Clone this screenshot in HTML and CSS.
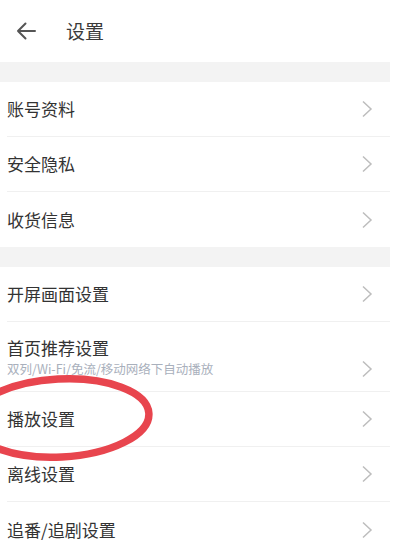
FILE: index.html
```html
<!DOCTYPE html>
<html lang="zh">
<head>
<meta charset="utf-8">
<title>设置</title>
<link rel="stylesheet" href="styles.css">
</head>
<body>
<div class="page">
  <header class="topbar">
    <svg class="back" width="22" height="20" viewBox="0 0 22 20"><path d="M20 10H3M10.5 2.5L3 10l7.5 7.5" fill="none" stroke="#555" stroke-width="2" stroke-linecap="round" stroke-linejoin="round"/></svg>
    <h1 class="title">设置</h1>
  </header>
  <div class="band"></div>
  <section class="group">
    <div class="row"><span class="label">账号资料</span><svg class="chev" width="12" height="18" viewBox="0 0 12 18"><path d="M2 1.5l8 7.5-8 7.5" fill="none" stroke="#bdbdbd" stroke-width="1.5"/></svg></div>
    <div class="row"><span class="label">安全隐私</span><svg class="chev" width="12" height="18" viewBox="0 0 12 18"><path d="M2 1.5l8 7.5-8 7.5" fill="none" stroke="#bdbdbd" stroke-width="1.5"/></svg></div>
    <div class="row last"><span class="label">收货信息</span><svg class="chev" width="12" height="18" viewBox="0 0 12 18"><path d="M2 1.5l8 7.5-8 7.5" fill="none" stroke="#bdbdbd" stroke-width="1.5"/></svg></div>
  </section>
  <div class="band"></div>
  <section class="group">
    <div class="row"><span class="label">开屏画面设置</span><svg class="chev" width="12" height="18" viewBox="0 0 12 18"><path d="M2 1.5l8 7.5-8 7.5" fill="none" stroke="#bdbdbd" stroke-width="1.5"/></svg></div>
    <div class="row tall"><div class="texts"><span class="label">首页推荐设置</span><span class="sub">双列/Wi-Fi/免流/移动网络下自动播放</span></div><svg class="chev" width="12" height="18" viewBox="0 0 12 18"><path d="M2 1.5l8 7.5-8 7.5" fill="none" stroke="#bdbdbd" stroke-width="1.5"/></svg></div>
    <div class="row"><span class="label">播放设置</span><svg class="chev" width="12" height="18" viewBox="0 0 12 18"><path d="M2 1.5l8 7.5-8 7.5" fill="none" stroke="#bdbdbd" stroke-width="1.5"/></svg></div>
    <div class="row"><span class="label">离线设置</span><svg class="chev" width="12" height="18" viewBox="0 0 12 18"><path d="M2 1.5l8 7.5-8 7.5" fill="none" stroke="#bdbdbd" stroke-width="1.5"/></svg></div>
    <div class="row last"><span class="label">追番/追剧设置</span><svg class="chev" width="12" height="18" viewBox="0 0 12 18"><path d="M2 1.5l8 7.5-8 7.5" fill="none" stroke="#bdbdbd" stroke-width="1.5"/></svg></div>
  </section>
  <svg class="mark" width="400" height="560" viewBox="0 0 400 560"><ellipse cx="60" cy="418" rx="89" ry="39" transform="rotate(-3 60 418)" fill="none" stroke="#e8454e" stroke-width="7.5"/></svg>
</div>
</body>
</html>
```
FILE: styles.css
```css
html, body {
  margin: 0;
  padding: 0;
  background: #fff;
}
body {
  font-family: "Noto Sans CJK SC", "Noto Sans", sans-serif;
  color: #333;
}
.page {
  position: relative;
  width: 400px;
  height: 560px;
  overflow: hidden;
}
.topbar {
  height: 62px;
  display: flex;
  align-items: center;
  padding-left: 15px;
  box-sizing: border-box;
}
.back {
  display: block;
}
.title {
  margin: 0 0 0 29px;
  font-size: 19px;
  font-weight: normal;
  color: #3a3a3a;
  line-height: 22px;
}
.band {
  height: 20px;
  width: 390px;
  background: #f3f3f3;
}
.group {
  display: flex;
  flex-direction: column;
}
.row {
  height: 55px;
  display: flex;
  align-items: center;
  justify-content: space-between;
  margin-left: 7px;
  margin-right: 10px;
  padding-right: 17px;
  border-bottom: 1px solid #f0f0f0;
  box-sizing: border-box;
}
.row.last {
  border-bottom: none;
}
.row.tall {
  height: 70px;
  align-items: flex-start;
  padding-top: 14px;
}
.row.tall .chev {
  margin-top: 24px;
}
.label {
  font-size: 17px;
  line-height: 24px;
  color: #333;
}
.texts {
  display: flex;
  flex-direction: column;
}
.sub {
  font-size: 12.5px;
  line-height: 18px;
  color: #a9b0bc;
}
.chev {
  display: block;
}
.mark {
  position: absolute;
  left: 0;
  top: 0;
  pointer-events: none;
}
```
